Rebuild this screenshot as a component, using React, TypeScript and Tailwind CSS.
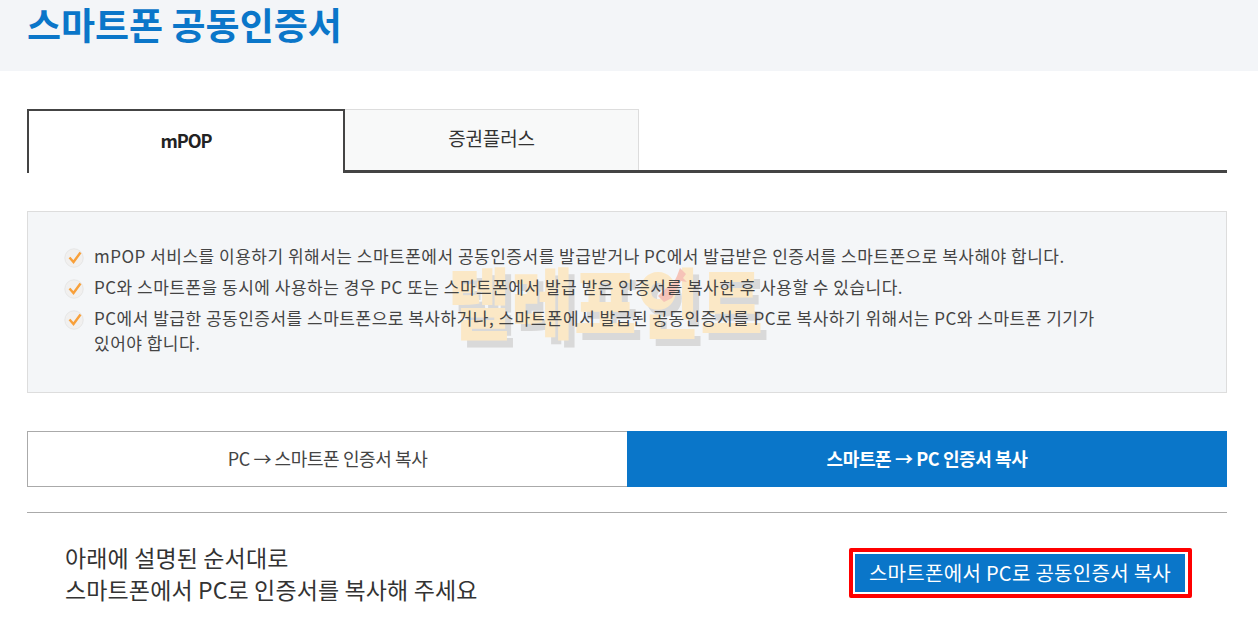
import React from "react";

const FONT = { fontFamily: '"Noto Sans CJK KR", "Noto Sans", sans-serif' };

const notes = [
  "mPOP 서비스를 이용하기 위해서는 스마트폰에서 공동인증서를 발급받거나 PC에서 발급받은 인증서를 스마트폰으로 복사해야 합니다.",
  "PC와 스마트폰을 동시에 사용하는 경우 PC 또는 스마트폰에서 발급 받은 인증서를 복사한 후 사용할 수 있습니다.",
  "PC에서 발급한 공동인증서를 스마트폰으로 복사하거나, 스마트폰에서 발급된 공동인증서를 PC로 복사하기 위해서는 PC와 스마트폰 기기가 있어야 합니다.",
];

function CheckIcon() {
  return (
    <svg className="absolute left-0 top-[4px]" width="21" height="21" viewBox="0 0 21 21">
      <circle cx="10" cy="11" r="9.2" fill="#f1f0ef" stroke="#e6e6e6" />
      <path d="M5.5 10.5 L9.5 15 L16.5 5.5" fill="none" stroke="#f8a03a" strokeWidth="2.4" />
    </svg>
  );
}

function Watermark() {
  return (
    <div className="absolute left-[420px] top-[52px]">
      <div className="origin-bottom scale-y-[1.14] text-[68px] font-black leading-[84px] tracking-[0.5px] text-[#fbe8c6] [text-shadow:6px_6px_0_#d9d9d9]">
        텔레포인트
      </div>
      <svg className="absolute left-[202px] top-[2px]" width="40" height="40" viewBox="0 0 40 40">
        <path d="M30 2 L36 8 L33 12 L37 16 L31 15 L22 32 L14 36 L8 30 L14 24 L24 16 L27 10 Z" fill="#f6c3b8" />
      </svg>
    </div>
  );
}

export default function App() {
  return (
    <div className="h-[626px] w-[1258px] overflow-hidden bg-white" style={FONT}>
      <div className="h-[71px] bg-[#f3f5f8] px-[27px]">
        <h1 className="text-[37px] font-bold leading-[48px] text-[#0a76c9]">스마트폰 공동인증서</h1>
      </div>

      <div className="ml-[27px] w-[1200px]">
        <div className="mt-[38px] flex h-[64px] border-b-[3px] border-[#444444]">
          <div className="relative -mb-[3px] flex h-[64px] w-[318px] items-center justify-center border-2 border-b-0 border-[#444444] bg-white pb-[4px] text-[18px] font-bold tracking-[-1px] text-[#222222]">
            mPOP
          </div>
          <div className="flex w-[294px] items-center justify-center border border-b-0 border-l-0 border-[#dddddd] bg-[#f8f9f9] pb-[4px] text-[19px] tracking-[-0.2px] text-[#333333]">
            증권플러스
          </div>
        </div>

        <div className="relative mt-[38px] h-[182px] border border-[#dddddd] bg-[#f4f6f8] pl-[36px] pr-[125px] pt-[31px]">
          <Watermark />
          <ul className="relative break-keep text-[17px] leading-[25px] tracking-[0.5px] text-[#444444]">
            {notes.map((note) => (
              <li key={note} className="relative mb-[6px] pl-[30px]">
                <CheckIcon />
                {note}
              </li>
            ))}
          </ul>
        </div>

        <div className="mt-[38px] flex h-[56px] text-[18px] tracking-[-0.4px]">
          <div className="flex w-[600px] items-center justify-center border border-r-0 border-[#aaaaaa] pb-[2px] text-[#444444]">
            PC → 스마트폰 인증서 복사
          </div>
          <div className="flex w-[600px] items-center justify-center bg-[#0a76c9] pb-[2px] font-bold text-white">
            스마트폰 → PC 인증서 복사
          </div>
        </div>

        <div className="mt-[25px] flex items-center justify-between border-t border-[#aaaaaa] pl-[38px] pr-[35px] pt-[28px]">
          <p className="text-[23px] leading-[32px] tracking-[0.13px] text-[#333333]">
            아래에 설명된 순서대로
            <br />
            스마트폰에서 PC로 인증서를 복사해 주세요
          </p>
          <div className="-mt-px rounded-[2px] border-4 border-[#ff0000] py-[2px] pl-[2px] pr-[3px]">
            <div className="flex h-[38px] w-[330px] items-center justify-center bg-[#0a76c9] text-[20px] tracking-[0.3px] text-white">
              스마트폰에서 PC로 공동인증서 복사
            </div>
          </div>
        </div>
      </div>
    </div>
  );
}
